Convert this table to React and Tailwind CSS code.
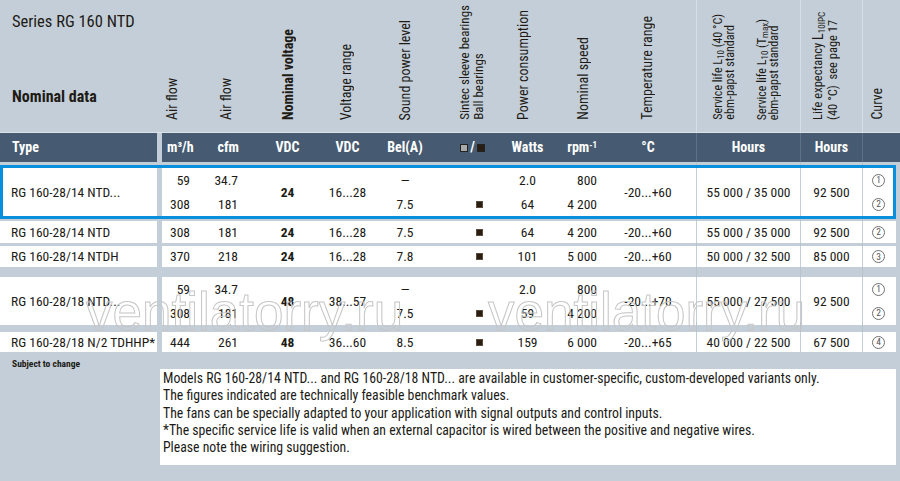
import React from "react";

// same 15 columns are used by every band of the sheet
const GRID =
  "grid grid-cols-[157px_5px_43px_50px_65px_55px_60px_75px_35px_55px_96px_104px_62px_34px_4px]";

const FONT = "font-['Roboto','Liberation_Sans',sans-serif] [font-stretch:75%]";

const ALIGN = {
  start: "justify-start",
  center: "justify-center",
  end: "justify-end",
};

const columns = [
  { key: "type", align: "start", pad: "pl-[11px]" },
  { key: "gap" },
  { key: "flow", align: "end", pad: "pr-[15px]" },
  { key: "cfm", align: "end", pad: "pr-[17px]" },
  { key: "vdc", align: "center", pad: "font-bold" },
  { key: "range", align: "center", pad: "" },
  { key: "bel", align: "center", pad: "" },
  { key: "bearing", align: "start", pad: "pl-[41px]" },
  { key: "watts", align: "center", pad: "" },
  { key: "rpm", align: "end", pad: "pr-[3px]" },
  { key: "temp", align: "center", pad: "" },
  { key: "service", align: "center", pad: "border-l border-[#c4ced8]" },
  { key: "life", align: "center", pad: "border-l border-[#c4ced8]" },
  { key: "curve", align: "start", pad: "pl-[9px] border-l border-[#c4ced8]" },
  { key: "end" },
];

const rows = [
  {
    type: "RG 160-28/14 NTD...",
    flow: ["59", "308"],
    cfm: ["34.7", "181"],
    vdc: "24",
    range: "16...28",
    bel: ["—", "7.5"],
    bearing: [null, "■"],
    watts: ["2.0", "64"],
    rpm: ["800", "4 200"],
    temp: "-20...+60",
    service: "55 000 / 35 000",
    life: "92 500",
    curve: [1, 2],
  },
  {
    type: "RG 160-28/14 NTD",
    flow: "308",
    cfm: "181",
    vdc: "24",
    range: "16...28",
    bel: "7.5",
    bearing: "■",
    watts: "64",
    rpm: "4 200",
    temp: "-20...+60",
    service: "55 000 / 35 000",
    life: "92 500",
    curve: 2,
  },
  {
    type: "RG 160-28/14 NTDH",
    flow: "370",
    cfm: "218",
    vdc: "24",
    range: "16...28",
    bel: "7.8",
    bearing: "■",
    watts: "101",
    rpm: "5 000",
    temp: "-20...+60",
    service: "50 000 / 32 500",
    life: "85 000",
    curve: 3,
  },
  {
    type: "RG 160-28/18 NTD...",
    flow: ["59", "308"],
    cfm: ["34.7", "181"],
    vdc: "48",
    range: "38...57",
    bel: ["—", "7.5"],
    bearing: [null, "■"],
    watts: ["2.0", "59"],
    rpm: ["800", "4 200"],
    temp: "-20...+70",
    service: "55 000 / 27 500",
    life: "92 500",
    curve: [1, 2],
  },
  {
    type: "RG 160-28/18 N/2 TDHHP*",
    flow: "444",
    cfm: "261",
    vdc: "48",
    range: "36...60",
    bel: "8.5",
    bearing: "■",
    watts: "159",
    rpm: "6 000",
    temp: "-20...+65",
    service: "40 000 / 22 500",
    life: "67 500",
    curve: 4,
  },
];

const notes = [
  "Models RG 160-28/14 NTD... and RG 160-28/18 NTD... are available in customer-specific, custom-developed variants only.",
  "The figures indicated are technically feasible benchmark values.",
  "The fans can be specially adapted to your application with signal outputs and control inputs.",
  "*The specific service life is valid when an external capacitor is wired between the positive and negative wires.",
  "Please note the wiring suggestion.",
];

const Square = () => (
  <span className="inline-block w-[7px] h-[7px] bg-[#2a1d12] border border-[#5a4a3c]" />
);

const Circled = ({ n }) => (
  <span className="w-[13px] h-[13px] rounded-full border border-[#707070] text-[9.5px] leading-none flex items-center justify-center text-[#555]">
    {n}
  </span>
);

const renderValue = (v) => {
  if (v === null || v === undefined) return null;
  if (v === "■") return <Square />;
  if (typeof v === "number") return <Circled n={v} />;
  return v;
};

const LINED = ["service", "life", "curve"];

const Gap = ({ h }) => (
  <div className={`${GRID} ${h}`}>
    {columns.map((c) => (
      <div
        key={c.key}
        className={LINED.includes(c.key) ? "border-l border-[#b9c3cd]" : ""}
      />
    ))}
  </div>
);

const Row = ({ row, h }) => (
  <div className={`${GRID} ${h} whitespace-nowrap`}>
    {columns.map((c) => {
      if (c.key === "gap" || c.key === "end") return <div key={c.key} />;
      const v = row[c.key];
      return (
        <div
          key={c.key}
          className={`bg-white flex flex-col justify-center ${c.pad}`}
        >
          {Array.isArray(v) ? (
            v.map((x, i) => (
              <div
                key={i}
                className={`h-[24px] flex items-center ${ALIGN[c.align]}`}
              >
                {renderValue(x)}
              </div>
            ))
          ) : (
            <div className={`flex items-center ${ALIGN[c.align]}`}>
              {renderValue(v)}
            </div>
          )}
        </div>
      );
    })}
  </div>
);

// rotated column caption, reads bottom to top
const V = ({ children, className = "" }) => (
  <div
    className={`[writing-mode:vertical-rl] rotate-180 whitespace-nowrap ${className}`}
  >
    {children}
  </div>
);

const TopCell = ({ children, className = "" }) => (
  <div className={`flex items-end pb-[12px] ${className}`}>{children}</div>
);

const Sub = ({ children }) => (
  <sub className="static align-sub text-[9px]">{children}</sub>
);

export default function App() {
  return (
    <div
      className={`relative w-[900px] h-[481px] overflow-hidden bg-[#c4ced8] text-[#201a15] text-[13.5px] ${FONT}`}
    >
      {/* captions */}
      <div className={`${GRID} h-[132px] text-[14px] leading-[15px]`}>
        <div className="pl-[12px] pt-[13px]">
          <div className="text-[16.5px] leading-[18px] whitespace-nowrap">
            Series RG 160 NTD
          </div>
          <div className="mt-[57px] text-[16px] leading-[18px] font-bold whitespace-nowrap">
            Nominal data
          </div>
        </div>
        <div />
        <TopCell>
          <V className="ml-[3px]">Air flow</V>
        </TopCell>
        <TopCell>
          <V className="ml-[14px]">Air flow</V>
        </TopCell>
        <TopCell>
          <V className="ml-[26px] font-bold">Nominal voltage</V>
        </TopCell>
        <TopCell>
          <V className="ml-[19px]">Voltage range</V>
        </TopCell>
        <TopCell>
          <V className="ml-[23px]">Sound power level</V>
        </TopCell>
        <TopCell className="text-[13px] leading-[14px]">
          <V className="ml-[23px]">
            Sintec sleeve bearings
            <br />
            Ball bearings
          </V>
        </TopCell>
        <TopCell>
          <V className="ml-[6px]">Power consumption</V>
        </TopCell>
        <TopCell>
          <V className="ml-[31px]">Nominal speed</V>
        </TopCell>
        <TopCell>
          <V className="ml-[40px]">Temperature range</V>
        </TopCell>
        <TopCell className="border-l border-[#d6dde4] text-[12px] leading-[12px]">
          <V className="ml-[15px]">
            Service life L<Sub>10</Sub> (40 °C)
            <br />
            ebm-papst standard
          </V>
          <V className="ml-[20px]">
            Service life L<Sub>10</Sub> (T<Sub>max</Sub>)
            <br />
            ebm-papst standard
          </V>
        </TopCell>
        <TopCell className="border-l border-[#d6dde4] text-[12.5px] leading-[13.5px]">
          <V className="ml-[10px]">
            Life expectancy <span className="text-[14px]">L</span>
            <Sub>10IPC</Sub>
            <br />
            (40 °C)&nbsp; see page 17
          </V>
        </TopCell>
        <TopCell className="border-l border-[#d6dde4]">
          <V className="ml-[7px]">Curve</V>
        </TopCell>
        <div />
      </div>

      {/* unit band */}
      <div
        className={`${GRID} h-[30px] border-t border-[#dce2e8] text-white font-bold text-[14px] whitespace-nowrap`}
      >
        <div className="bg-[#465b71] flex items-center pl-[12px]">Type</div>
        <div />
        <div className="bg-[#465b71] flex items-center pl-[5px]">m³/h</div>
        <div className="bg-[#465b71] flex items-center justify-end pr-[16px]">
          cfm
        </div>
        <div className="bg-[#465b71] flex items-center justify-center">VDC</div>
        <div className="bg-[#465b71] flex items-center justify-center">VDC</div>
        <div className="bg-[#465b71] flex items-center justify-center">
          Bel(A)
        </div>
        <div className="bg-[#465b71] flex items-center justify-center gap-[2px]">
          <span className="inline-block w-[8px] h-[8px] bg-[#a9a9a9] border border-[#222]" />
          <span>/</span>
          <span className="inline-block w-[8px] h-[8px] bg-[#2a1d12] border border-[#222]" />
        </div>
        <div className="bg-[#465b71] flex items-center justify-center">
          Watts
        </div>
        <div className="bg-[#465b71] flex items-center justify-end pr-[3px]">
          <span>
            rpm<sup className="text-[9px]">-1</sup>
          </span>
        </div>
        <div className="bg-[#465b71] flex items-center justify-center">°C</div>
        <div className="bg-[#465b71] flex items-center justify-center border-l border-[#5c7086]">
          Hours
        </div>
        <div className="bg-[#465b71] flex items-center justify-center border-l border-[#5c7086]">
          Hours
        </div>
        <div className="bg-[#465b71] border-l border-[#5c7086]" />
        <div className="bg-[#465b71]" />
      </div>

      <Gap h="h-[3px]" />
      <div className="relative">
        <Row row={rows[0]} h="h-[54px]" />
        <div className="absolute left-0 top-0 w-[896px] h-full border-[3px] border-[#0a8fdc] pointer-events-none" />
      </div>
      <Gap h="h-[2px]" />
      <Row row={rows[1]} h="h-[22px]" />
      <Gap h="h-[3px]" />
      <Row row={rows[2]} h="h-[21px]" />
      <Gap h="h-[10px]" />
      <Row row={rows[3]} h="h-[45px]" />
      <Gap h="h-[10px]" />
      <Row row={rows[4]} h="h-[20px]" />

      <div className="h-[17px] flex items-end pl-[12px]">
        <span className="text-[9.5px] leading-[10px] font-bold">
          Subject to change
        </span>
      </div>

      <div className="flex">
        <div className="w-[160px] shrink-0" />
        <div className="w-[736px] h-[96px] bg-white pl-[3px] pt-[1px] text-[13.75px] leading-[17.3px]">
          {notes.map((n) => (
            <div key={n} className="whitespace-nowrap">
              {n}
            </div>
          ))}
        </div>
      </div>

      {/* watermark */}
      <span className="absolute left-[86px] top-[285px] text-[53px] leading-[53px] font-['Liberation_Sans',sans-serif] [font-stretch:100%] text-transparent [-webkit-text-stroke:1px_#c6c6c6] pointer-events-none whitespace-nowrap">
        ventilatorry.ru
      </span>
      <span className="absolute left-[488px] top-[285px] text-[53px] leading-[53px] font-['Liberation_Sans',sans-serif] [font-stretch:100%] text-transparent [-webkit-text-stroke:1px_#c6c6c6] pointer-events-none whitespace-nowrap">
        ventilatorry.ru
      </span>
    </div>
  );
}
